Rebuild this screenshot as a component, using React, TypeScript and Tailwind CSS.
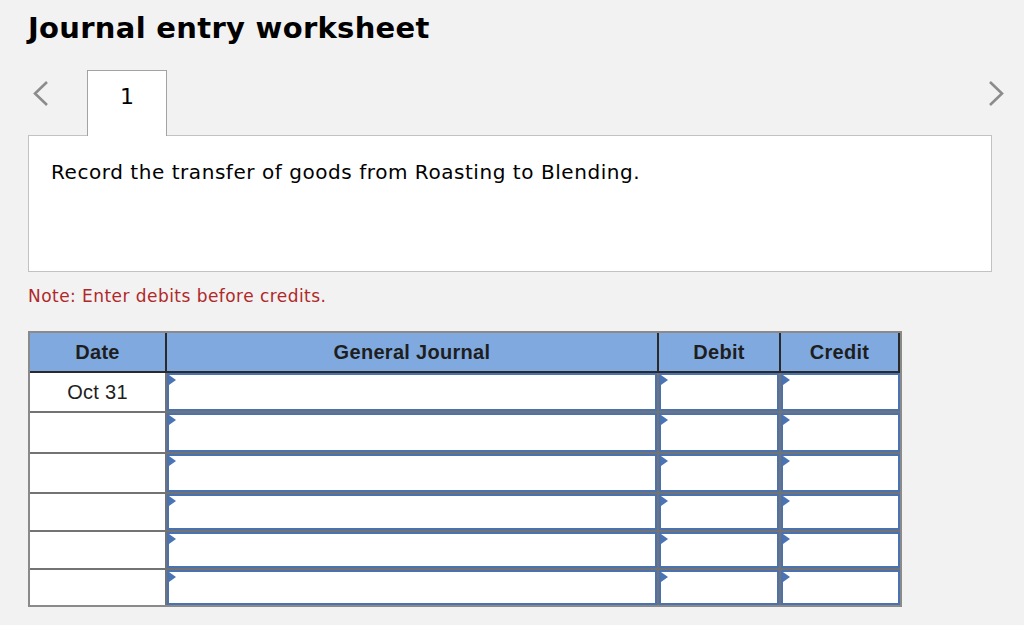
import React from "react";

const rowHeights = ["h-[38px]", "h-[39px]", "h-[38px]", "h-[36px]", "h-[36px]", "h-[35px]"];

const Marker = () => (
  <span className="absolute left-0 top-0 h-0 w-0 border-y-[5px] border-l-[7px] border-y-transparent border-l-[#4a74b4]" />
);

const InputCell = ({ height }: { height: string }) => (
  <div className={`${height} relative border-2 border-[#4a72b0] bg-white`}>
    <Marker />
  </div>
);

const Chevron = ({ dir }: { dir: "left" | "right" }) => (
  <svg width="16" height="26" viewBox="0 0 16 26" className="block">
    <polyline
      points={dir === "left" ? "14,1 2,12.5 14,24" : "2,1 14,12.5 2,24"}
      fill="none"
      stroke="#8c8c8c"
      strokeWidth="2.6"
    />
  </svg>
);

export default function App() {
  return (
    <div className="min-h-screen bg-[#f2f2f2] pl-[28px] pt-[12px] font-['DejaVu_Sans',Verdana,sans-serif] text-black">
      <h1 className="text-[29px] font-bold leading-[32px] tracking-[0.3px]">Journal entry worksheet</h1>

      <div className="mt-[26px] flex w-[976px] items-start">
        <div className="flex h-[65px] w-[59px] items-center pl-[5px] pb-[18px]">
          <Chevron dir="left" />
        </div>
        <div className="relative z-10 -mb-px h-[66px] w-[80px] border border-b-0 border-[#a3a3a3] bg-white pt-[14px] text-center text-[22px] leading-[24px]">
          1
        </div>
        <div className="flex-1" />
        <div className="flex h-[65px] items-center pb-[18px]">
          <Chevron dir="right" />
        </div>
      </div>

      <div className="h-[137px] w-[964px] border border-[#c2c2c2] bg-white pl-[22px] pt-[24px] text-[20px] leading-[24px] tracking-[0.55px]">
        Record the transfer of goods from Roasting to Blending.
      </div>

      <p className="mt-[12px] text-[17px] leading-[24px] tracking-[0.45px] text-[#b0282a]">
        Note: Enter debits before credits.
      </p>

      <div className="mt-[23px] w-[874px] border-2 border-[#8a8a8a] font-['Liberation_Sans',Arial,sans-serif] text-[20px] tracking-[0.3px] text-[#1e1e1e]">
        <div className="grid grid-cols-[135px_490px_120px_117px] gap-x-[2px] border-b-2 border-r-2 border-[#2a2a2a] bg-[#2a2a2a]">
          {["Date", "General Journal", "Debit", "Credit"].map((h) => (
            <div key={h} className="flex h-[38px] items-center justify-center bg-[#80aadf] font-bold">
              {h}
            </div>
          ))}
        </div>
        <div className="grid grid-cols-[135px_490px_120px_119px] gap-[2px] bg-[#737373]">
          {rowHeights.map((h, i) => (
            <React.Fragment key={i}>
              <div className={`${h} flex items-center justify-center bg-white`}>{i === 0 ? "Oct 31" : ""}</div>
              <InputCell height={h} />
              <InputCell height={h} />
              <InputCell height={h} />
            </React.Fragment>
          ))}
        </div>
      </div>
    </div>
  );
}
